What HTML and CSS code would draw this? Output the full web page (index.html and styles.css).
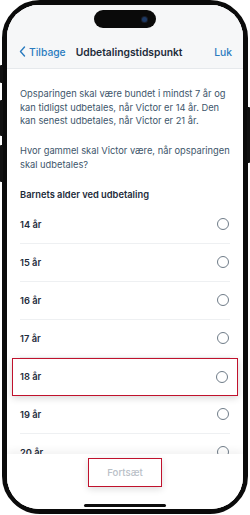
FILE: index.html
```html
<!DOCTYPE html>
<html lang="da">
<head>
    <meta charset="UTF-8">
    <meta name="viewport" content="width=device-width, initial-scale=1.0">
    <title>Udbetalingstidspunkt</title>
    <link rel="stylesheet" href="styles.css">
</head>
<body>
    <div class="phone">
        <!-- side buttons -->
        <span class="side-btn action"></span>
        <span class="side-btn vol-up"></span>
        <span class="side-btn vol-down"></span>
        <span class="side-btn power"></span>

        <div class="screen">
            <div class="status">
                <div class="island"><span class="camera"></span></div>
            </div>

            <header class="nav">
                <a class="nav-link back" href="#">
                    <svg width="7" height="11" viewBox="0 0 7 11"><path d="M5.5 1 1.5 5.5 5.5 10" fill="none" stroke="currentColor" stroke-width="1.4" stroke-linecap="round" stroke-linejoin="round"/></svg>
                    Tilbage
                </a>
                <h1>Udbetalingstidspunkt</h1>
                <a class="nav-link" href="#">Luk</a>
            </header>

            <main class="content">
                <p>Opsparingen skal være bundet i mindst 7 år og kan tidligst udbetales, når Victor er 14 år. Den kan senest udbetales, når Victor er 21 år.</p>
                <p>Hvor gammel skal Victor være, når opsparingen skal udbetales?</p>
                <h2>Barnets alder ved udbetaling</h2>
                <ul class="options">
                    <li><span>14 år</span><span class="radio"></span></li>
                    <li><span>15 år</span><span class="radio"></span></li>
                    <li><span>16 år</span><span class="radio"></span></li>
                    <li><span>17 år</span><span class="radio"></span></li>
                    <li class="marked"><span>18 år</span><span class="radio"></span></li>
                    <li><span>19 år</span><span class="radio"></span></li>
                    <li><span>20 år</span><span class="radio"></span></li>
                </ul>
            </main>

            <footer class="bottom">
                <button class="next" disabled>Fortsæt</button>
                <span class="home-bar"></span>
            </footer>
        </div>
    </div>
</body>
</html>
```

FILE: styles.css
```css
/* Base */
body {
    margin: 0;
    width: 250px;
    height: 515px;
    background: #fff;
    font-family: Inter, "Open Sans", Arial, sans-serif;
    overflow: hidden;
}

/* Phone frame */
.phone {
    position: relative;
    box-sizing: border-box;
    width: 246px;
    height: 514px;
    margin-left: 2px;
    border: 5px solid #0b0b0b;
    border-radius: 38px;
    box-shadow: inset 0 0 0 1px #8a8a8a;
}

.side-btn {
    position: absolute;
    width: 3px;
    background: #111;
    border-radius: 1px;
}

.action   { left: -7px; top: 60px;  height: 18px; }
.vol-up   { left: -7px; top: 95px;  height: 36px; }
.vol-down { left: -7px; top: 140px; height: 37px; }
.power    { right: -7px; top: 102px; height: 56px; }

.screen {
    height: 100%;
    display: flex;
    flex-direction: column;
    border-radius: 32px;
    overflow: hidden;
    background: #fff;
}

/* Status bar + nav */
.status {
    height: 30px;
    flex-shrink: 0;
    background: #f6f7f8;
    display: flex;
    justify-content: center;
    padding-top: 5px;
    box-sizing: border-box;
}

.island {
    width: 62px;
    height: 18px;
    background: #0a0a0a;
    border-radius: 9px;
    display: flex;
    align-items: center;
    justify-content: flex-end;
    padding-right: 9px;
    box-sizing: border-box;
}

.camera {
    width: 5px;
    height: 5px;
    border-radius: 50%;
    background: #1d3a66;
    box-shadow: 0 0 0 1px #1a1f2c;
}

.nav {
    height: 34px;
    flex-shrink: 0;
    background: #f6f7f8;
    border-bottom: 1px solid #e6e9ec;
    box-sizing: border-box;
    display: flex;
    align-items: center;
    padding: 0 11px 0 12px;
}

.nav h1 {
    flex: 1;
    margin: 0 0 0 10px;
    font-size: 10.3px;
    font-weight: 600;
    color: #1d2b3a;
}

.nav-link {
    color: #2a7bbf;
    font-size: 10.3px;
    font-weight: 500;
    text-decoration: none;
}

.back {
    display: flex;
    align-items: center;
    gap: 3px;
}

/* Content */
.content {
    flex: 1;
    overflow: hidden;
    padding: 18px 11px 0 13px;
    color: #40566b;
}

.content p {
    margin: 0 0 16.5px;
    font-size: 9.3px;
    line-height: 13.5px;
}

.content h2 {
    margin: 0 0 4px;
    font-size: 9.3px;
    line-height: 14px;
    font-weight: 600;
    color: #1d2b3a;
}

.options {
    list-style: none;
    margin: 0 2px 0 0;
    padding: 0;
}

.options li {
    height: 38px;
    box-sizing: border-box;
    display: flex;
    align-items: center;
    justify-content: space-between;
    border-bottom: 1px solid #eef0f2;
    font-size: 9.3px;
    font-weight: 600;
    color: #1f2d3d;
    padding-right: 1px;
}

.options li.marked {
    margin: 0 -8px;
    padding: 0 9px 0 7px;
    border: 1.5px solid #c0122d;
    box-shadow: 0 2px 7px rgba(0, 0, 0, 0.16);
}

.radio {
    width: 10px;
    height: 10px;
    border: 1.2px solid #6f7c88;
    border-radius: 50%;
}

/* Bottom bar */
.bottom {
    height: 55px;
    flex-shrink: 0;
    display: flex;
    flex-direction: column;
    align-items: center;
    padding-top: 4px;
    box-sizing: border-box;
    background: #fff;
    box-shadow: 0 -3px 8px rgba(0, 0, 0, 0.06);
    position: relative;
}

.next {
    width: 74px;
    height: 29px;
    border: 1.5px solid #c0122d;
    background: #fff;
    color: #b9c0c7;
    font-family: inherit;
    font-size: 9.6px;
    font-weight: 500;
    box-shadow: 0 2px 7px rgba(0, 0, 0, 0.14);
}

.home-bar {
    width: 82px;
    height: 3px;
    margin-top: 17px;
    background: #0d0d0d;
    border-radius: 2px;
}
```
